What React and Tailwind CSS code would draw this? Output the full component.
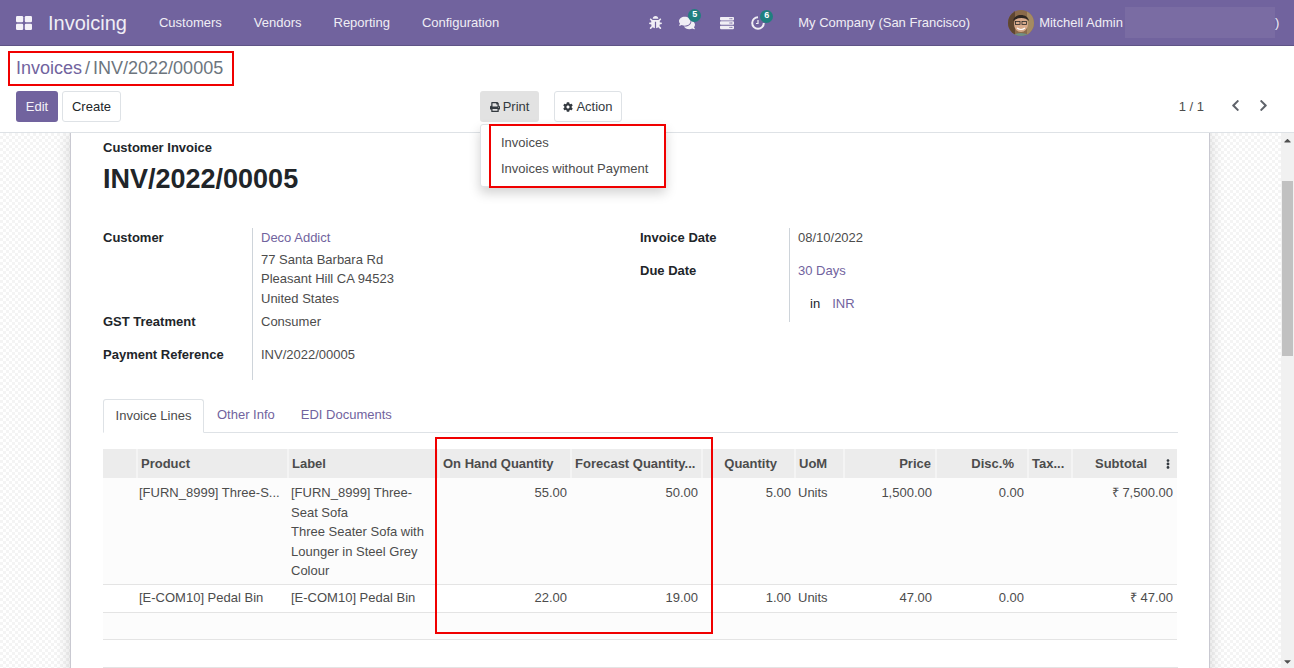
import React from 'react';
import { FaBug, FaComments, FaServer, FaPrint, FaCog, FaChevronLeft, FaChevronRight, FaEllipsisV, FaCaretUp, FaCaretDown } from 'react-icons/fa';

const menu = ['Customers', 'Vendors', 'Reporting', 'Configuration'];

const columns = [
    { label: '', width: 'w-[34px]' },
    { label: 'Product', width: 'w-[151px]' },
    { label: 'Label', width: 'w-[151px]' },
    { label: 'On Hand Quantity', width: 'w-[132px]' },
    { label: 'Forecast Quantity...', width: 'w-[131px]' },
    { label: 'Quantity', width: 'w-[93px]', right: true, offset: 'mr-[14px]' },
    { label: 'UoM', width: 'w-[49px]' },
    { label: 'Price', width: 'w-[92px]', right: true },
    { label: 'Disc.%', width: 'w-[92px]', right: true, offset: 'mr-[10px]' },
    { label: 'Tax...', width: 'w-[44px]' },
    { label: 'Subtotal', width: 'w-[105px]', right: true, offset: 'mr-[27px]', last: true },
];

function Badge({ n }) {
    return (
        <span className="absolute -top-[6px] left-[9px] flex h-[13px] w-[13px] items-center justify-center rounded-full bg-[#1f7f7f] text-[9px] font-bold text-white">
            {n}
        </span>
    );
}

function Avatar() {
    return (
        <svg width="26" height="26" viewBox="0 0 26 26" className="rounded-full">
            <rect width="26" height="26" fill="#8a6a4a" />
            <rect x="0" y="0" width="7" height="26" fill="#5f4630" />
            <rect x="19" y="0" width="7" height="26" fill="#a58a62" />
            <ellipse cx="13" cy="14" rx="7" ry="8" fill="#d9ab8c" />
            <path d="M5 11 C6 3 20 3 21 11 C18 7 9 7 5 11Z" fill="#2e2620" />
            <rect x="7.5" y="11.5" width="4.5" height="3" fill="none" stroke="#2b2b2b" strokeWidth="0.8" />
            <rect x="14" y="11.5" width="4.5" height="3" fill="none" stroke="#2b2b2b" strokeWidth="0.8" />
            <path d="M9 18 Q13 21 17 18" stroke="#fff" strokeWidth="1.2" fill="none" />
            <path d="M3 26 Q13 20 23 26Z" fill="#6f8f86" />
        </svg>
    );
}

function Navbar() {
    return (
        <header className="flex h-[46px] shrink-0 items-center border-b border-[#5f5486] bg-[#71639e] text-[13px] text-[#f0eef5]">
            <svg width="16" height="14" viewBox="0 0 16 14" className="ml-[16px]" fill="#f4f2f8">
                <rect x="0" y="0" width="7.2" height="6.2" rx="1.2" />
                <rect x="8.8" y="0" width="7.2" height="6.2" rx="1.2" />
                <rect x="0" y="7.8" width="7.2" height="6.2" rx="1.2" />
                <rect x="8.8" y="7.8" width="7.2" height="6.2" rx="1.2" />
            </svg>
            <span className="ml-[16px] text-[20px]">Invoicing</span>
            <nav className="ml-[32px] flex gap-[32px]">
                {menu.map((item) => (
                    <span key={item}>{item}</span>
                ))}
            </nav>
            <div className="ml-[123px] flex items-center">
                <FaBug className="ml-[27px] text-[13px]" />
                <span className="relative ml-[17px]">
                    <FaComments className="text-[16px]" />
                    <Badge n="5" />
                </span>
                <FaServer className="ml-[25px] text-[14px]" />
                <span className="relative ml-[17px]">
                    <svg width="14" height="14" viewBox="0 0 14 14" fill="none" stroke="#f0eef5" strokeWidth="2">
                        <path d="M7 1.2 A5.8 5.8 0 1 0 12.8 7" />
                        <path d="M7 4 V7.5 H5" strokeWidth="1.2" />
                    </svg>
                    <Badge n="6" />
                </span>
            </div>
            <span className="ml-[33px]">My Company (San Francisco)</span>
            <span className="ml-[38px]"><Avatar /></span>
            <span className="ml-[5px]">Mitchell Admin</span>
            <span className="ml-[2px] h-[31px] w-[150px] bg-[#7a6ca3]" />
            <span>)</span>
        </header>
    );
}

function ControlPanel() {
    return (
        <section className="relative z-10 h-[87px] shrink-0 border-b border-[#dee2e6] bg-white">
            <div className="flex h-[45px] items-center pl-[16px] text-[18px] text-[#6c757d]">
                <span className="text-[#71639e]">Invoices</span>
                <span className="mx-[3px]">/</span>
                <span>INV/2022/00005</span>
            </div>
            <div className="flex items-start text-[13px]">
                <button className="ml-[16px] h-[31px] w-[42px] rounded-[3px] bg-[#71639e] text-[#f4f2f8]">Edit</button>
                <button className="ml-[4px] h-[31px] w-[59px] rounded-[3px] border border-[#dee2e6] text-[#212529]">Create</button>
                <div className="relative ml-[359px]">
                    <button className="flex h-[31px] w-[59px] items-center justify-center gap-[3px] rounded-[3px] bg-[#e2e2e2] text-[#343a40]">
                        <FaPrint className="text-[10px]" />
                        Print
                    </button>
                    <div className="absolute left-0 top-[33px] h-[63px] w-[186px] rounded-[3px] border border-[#dee2e6] bg-white pl-[20px] pt-[5px] leading-[26px] text-[#4c4c4c] shadow-[0_6px_12px_rgba(0,0,0,0.18)]">
                        <div>Invoices</div>
                        <div>Invoices without Payment</div>
                    </div>
                </div>
                <button className="ml-[15px] flex h-[31px] w-[68px] items-center justify-center gap-[3px] rounded-[3px] border border-[#dee2e6] text-[#343a40]">
                    <FaCog className="text-[10px]" />
                    Action
                </button>
                <span className="ml-auto mt-[6px] text-[#4c4c4c]">1 / 1</span>
                <FaChevronLeft className="ml-[25px] mt-[8px] text-[13px] text-[#5f636a]" />
                <FaChevronRight className="ml-[15px] mr-[24px] mt-[8px] text-[13px] text-[#5f636a]" />
            </div>
        </section>
    );
}

function Field({ label, height, children }) {
    return (
        <div className="flex" style={{ minHeight: height }}>
            <div className="w-[149px] font-bold text-[#212529]">{label}</div>
            <div className="flex-1 border-l border-[#ced4da] pl-[8px] text-[#4c4c4c]">{children}</div>
        </div>
    );
}

function InvoiceTable() {
    return (
        <table className="w-[1074px] table-fixed border-collapse text-[13px] text-[#4c4c4c]">
            <colgroup>
                {columns.map((c, i) => (
                    <col key={i} className={c.width} />
                ))}
            </colgroup>
            <thead>
                <tr className="h-[29px] bg-[#ececec] text-[#4c4c4c]">
                    {columns.map((c, i) => (
                        <th key={i} className={`relative truncate border-l-2 border-[#f4f4f4] px-[3px] font-bold first:border-l-0 ${c.right ? 'text-right' : 'text-left'}`}>
                            <span className={c.offset || (c.right ? 'mr-[1px]' : '')}>{c.label}</span>
                            {c.last && <FaEllipsisV className="absolute right-[4px] top-[10px] text-[10px] text-[#343a40]" />}
                        </th>
                    ))}
                </tr>
            </thead>
            <tbody className="leading-[19.5px]">
                <tr className="h-[106px] border-b border-[#e4e4e4] bg-[#fcfcfc] align-top">
                    <td />
                    <td className="truncate pl-[2px] pr-[4px] pt-[5px]">[FURN_8999] Three-S...</td>
                    <td className="px-[3px] pt-[5px]">
                        [FURN_8999] Three-<br />Seat Sofa<br />Three Seater Sofa with<br />Lounger in Steel Grey<br />Colour
                    </td>
                    <td className="pr-[4px] pt-[5px] text-right">55.00</td>
                    <td className="pr-[4px] pt-[5px] text-right">50.00</td>
                    <td className="pr-[4px] pt-[5px] text-right">5.00</td>
                    <td className="px-[3px] pt-[5px]">Units</td>
                    <td className="pr-[4px] pt-[5px] text-right">1,500.00</td>
                    <td className="pr-[4px] pt-[5px] text-right">0.00</td>
                    <td />
                    <td className="pr-[4px] pt-[5px] text-right">₹ 7,500.00</td>
                </tr>
                <tr className="h-[28px] border-b border-[#e4e4e4] bg-white">
                    <td />
                    <td className="truncate pl-[2px] pr-[4px]">[E-COM10] Pedal Bin</td>
                    <td className="px-[3px]">[E-COM10] Pedal Bin</td>
                    <td className="pr-[4px] text-right">22.00</td>
                    <td className="pr-[4px] text-right">19.00</td>
                    <td className="pr-[4px] text-right">1.00</td>
                    <td className="px-[3px]">Units</td>
                    <td className="pr-[4px] text-right">47.00</td>
                    <td className="pr-[4px] text-right">0.00</td>
                    <td />
                    <td className="pr-[4px] text-right">₹ 47.00</td>
                </tr>
                <tr className="h-[27px] border-b border-[#e4e4e4] bg-[#fcfcfc]">
                    <td colSpan={11} />
                </tr>
            </tbody>
        </table>
    );
}

function Sheet() {
    return (
        <div className="ml-[70px] h-[700px] w-[1140px] shrink-0 border-x border-[#c9c9d1] bg-white pl-[32px] pr-[31px] text-[13px] shadow-[0_0_14px_rgba(0,0,0,0.16)]">
            <div className="pt-[6px] font-bold leading-[18px] text-[#212529]">Customer Invoice</div>
            <h1 className="mt-[6px] text-[27px] font-bold leading-[32px] text-[#212529]">INV/2022/00005</h1>

            <div className="mt-[33px] flex leading-[19.5px]">
                <div className="w-[537px]">
                    <Field label="Customer" height="84px">
                        <div className="text-[#71639e]">Deco Addict</div>
                        <div className="mt-[2px]">77 Santa Barbara Rd</div>
                        <div>Pleasant Hill CA 94523</div>
                        <div>United States</div>
                    </Field>
                    <Field label="GST Treatment" height="33px">
                        <div>Consumer</div>
                    </Field>
                    <Field label="Payment Reference" height="35px">
                        <div>INV/2022/00005</div>
                    </Field>
                </div>
                <div className="flex-1">
                    <Field label="Invoice Date" height="33px">
                        <div>08/10/2022</div>
                    </Field>
                    <Field label="Due Date" height="33px">
                        <div className="text-[#71639e]">30 Days</div>
                    </Field>
                    <Field label="" height="28px">
                        <div className="pl-[12px]">
                            <span className="text-[#212529]">in</span>
                            <span className="ml-[12px] text-[#71639e]">INR</span>
                        </div>
                    </Field>
                </div>
            </div>

            <div className="mt-[19px] flex h-[34px] items-end border-b border-[#dee2e6]">
                <div className="-mb-px flex h-[34px] w-[101px] items-center justify-center rounded-t-[3px] border border-b-white border-[#dee2e6] bg-white text-[#4c4c4c]">Invoice Lines</div>
                <div className="flex h-[34px] items-center pl-[13px] text-[#71639e]">Other Info</div>
                <div className="flex h-[34px] items-center pl-[26px] text-[#71639e]">EDI Documents</div>
            </div>

            <div className="mt-[16px]">
                <InvoiceTable />
            </div>
            <div className="mt-[27px] border-t border-[#e4e4e4]" />
        </div>
    );
}

function Scrollbar() {
    return (
        <div className="flex w-[13px] shrink-0 flex-col items-center bg-[#f1f1f1]">
            <FaCaretUp className="mt-[2px] text-[11px] text-[#505050]" />
            <div className="mt-[35px] h-[175px] w-[11px] bg-[#c1c1c1]" />
            <FaCaretDown className="mb-[1px] mt-auto text-[11px] text-[#505050]" />
        </div>
    );
}

export default function App() {
    return (
        <div className="relative flex h-screen flex-col overflow-hidden bg-white font-['Liberation_Sans',sans-serif]">
            <Navbar />
            <ControlPanel />
            <main className="flex min-h-0 flex-1">
                <div className="min-w-0 flex-1 overflow-hidden bg-[repeating-conic-gradient(#f4f4f4_0_25%,#ffffff_0_50%)] bg-[length:6px_6px]">
                    <Sheet />
                </div>
                <Scrollbar />
            </main>

            {/* red annotation boxes from the screenshot */}
            <div className="pointer-events-none absolute left-[8px] top-[51px] z-20 h-[35px] w-[226px] border-2 border-[#f00000]" />
            <div className="pointer-events-none absolute left-[489px] top-[124px] z-20 h-[64px] w-[177px] border-2 border-[#f00000]" />
            <div className="pointer-events-none absolute left-[435px] top-[437px] z-20 h-[197px] w-[278px] border-2 border-[#f00000]" />
        </div>
    );
}
